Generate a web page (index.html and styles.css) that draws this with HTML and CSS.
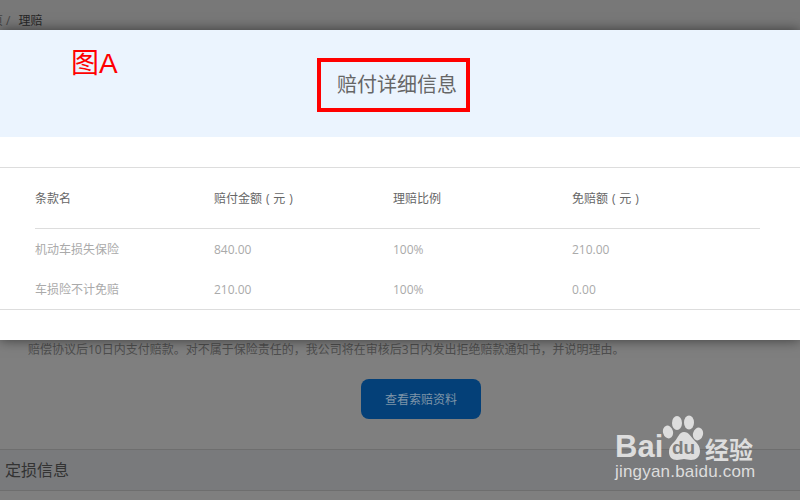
FILE: index.html
```html
<!DOCTYPE html>
<html lang="zh">
<head>
<meta charset="utf-8">
<title>赔付详细信息</title>
<link rel="stylesheet" href="styles.css">
</head>
<body>
<div class="page">
  <div class="crumb"><span class="crumb-sep">页 /</span><span>理赔</span></div>
  <p class="notice">赔偿协议后10日内支付赔款。对不属于保险责任的，我公司将在审核后3日内发出拒绝赔款通知书，并说明理由。</p>
  <div class="action"><button class="btn">查看索赔资料</button></div>
  <div class="section">定损信息</div>
</div>
<div class="modal">
  <div class="modal-head">
    <span class="note">图A</span>
    <h2 class="modal-title">赔付详细信息</h2>
  </div>
  <div class="modal-body">
    <div class="table">
      <div class="row head"><span>条款名</span><span>赔付金额 ( 元 )</span><span>理赔比例</span><span>免赔额 ( 元 )</span></div>
      <div class="row first"><span>机动车损失保险</span><span>840.00</span><span>100%</span><span>210.00</span></div>
      <div class="row"><span>车损险不计免赔</span><span>210.00</span><span>100%</span><span>0.00</span></div>
    </div>
  </div>
</div>
<div class="mark">
  <div class="mark-top">
    <span class="mark-bai">Bai</span>
    <span class="mark-paw">
      <svg width="42" height="48" viewBox="0 0 42 48">
        <ellipse cx="6" cy="18" rx="5" ry="6.5" transform="rotate(-15 6 18)"/>
        <ellipse cx="15" cy="9" rx="5" ry="7"/>
        <ellipse cx="27" cy="8.5" rx="5" ry="7"/>
        <ellipse cx="36" cy="20" rx="5" ry="6.5" transform="rotate(15 36 20)"/>
        <path d="M22 18c5 0 7 5 10 8s6 6 6 11c0 6-4 9-9 9-3 0-5-1-7-1s-4 1-7 1c-5 0-8-3-8-8 0-5 3-8 6-11s4-9 9-9z"/>
      </svg>
      <span class="mark-du">du</span>
    </span>
    <span class="mark-cn">经验</span>
  </div>
  <div class="mark-url">jingyan.baidu.com</div>
</div>
</body>
</html>
```
FILE: styles.css
```css
* { box-sizing: border-box; }
html, body { margin: 0; height: 100%; }
body {
  width: 800px;
  height: 500px;
  overflow: hidden;
  position: relative;
  background: #7f7f7f;
  font-family: "Open Sans", "Noto Sans CJK SC", sans-serif;
}
.page { display: flex; flex-direction: column; height: 500px; }
.crumb {
  height: 30px;
  background: #787878;
  font-size: 12px;
  line-height: 42px;
  color: #262626;
  display: flex;
  gap: 8px;
  margin-left: -9px;
}
.crumb-sep { color: #444; }
.notice {
  margin: 310px 0 0 28px;
  height: 20px;
  font-size: 12px;
  line-height: 19px;
  color: #4e4e4e;
  white-space: nowrap;
}
.action { display: flex; padding: 19px 0 0 361px; height: 89px; }
.btn {
  width: 120px;
  height: 40px;
  border: 0;
  border-radius: 8px;
  background: #044078;
  color: #7f95a8;
  font: inherit;
  font-size: 12px;
}
.section {
  height: 42px;
  padding-left: 5px;
  background: #797a7c;
  border-top: 1px solid #6e6e6e;
  border-bottom: 1px solid #6e6e6e;
  font-size: 16px;
  line-height: 41px;
  color: #333;
}
.modal {
  position: absolute;
  left: 0;
  top: 30px;
  width: 800px;
  height: 310px;
  background: #fff;
  box-shadow: 0 0 12px rgba(0, 0, 0, .55);
}
.modal-head {
  position: relative;
  height: 107px;
  background: #ebf4fe;
  display: flex;
  padding: 28px 0 0 317px;
}
.note {
  position: absolute;
  left: 71px;
  top: 14px;
  font-family: "Liberation Sans", "Noto Sans CJK SC", sans-serif;
  font-size: 28px;
  line-height: 40px;
  color: #f00;
}
.modal-title {
  margin: 0;
  width: 153px;
  height: 54px;
  border: 4px solid #f00;
  font-size: 20px;
  font-weight: 400;
  line-height: 46px;
  text-align: center;
  padding-left: 7px;
  color: #666;
}
.modal-body { padding-top: 30px; }
.table {
  height: 143px;
  padding: 0 40px 0 35px;
  border-top: 1px solid #ddd;
  border-bottom: 1px solid #ddd;
}
.row {
  display: grid;
  grid-template-columns: repeat(4, 179px);
  height: 40px;
  padding-bottom: 2px;
  align-items: center;
  font-size: 12px;
  color: #aaa;
}
.head { height: 61px; padding-bottom: 0; color: #666; border-bottom: 1px solid #ddd; word-spacing: .8px; }
.first { height: 41px; padding-bottom: 1px; }
.mark {
  position: absolute;
  left: 615px;
  top: 414px;
  width: 185px;
  color: #ddd;
}
.mark-top { display: flex; align-items: flex-end; height: 48px; }
.mark-bai {
  width: 47px;
  font-family: "Liberation Sans", sans-serif;
  font-weight: 700;
  font-size: 31px;
  line-height: 30px;
}
.mark-paw { position: relative; width: 42px; height: 48px; }
.mark-paw svg { display: block; fill: #ddd; }
.mark-du {
  position: absolute;
  left: 10px;
  top: 24px;
  font-family: "Liberation Sans", sans-serif;
  font-weight: 700;
  font-size: 19px;
  line-height: 20px;
  color: #7f7f7f;
}
.mark-cn {
  font-family: "Noto Sans CJK SC", sans-serif;
  font-size: 24px;
  line-height: 24px;
  font-weight: 700;
  margin: 0 0 1px 1px;
}
.mark-url {
  font-family: "Liberation Sans", sans-serif;
  font-size: 17px;
  line-height: 20px;
  letter-spacing: .2px;
  white-space: nowrap;
}
```
